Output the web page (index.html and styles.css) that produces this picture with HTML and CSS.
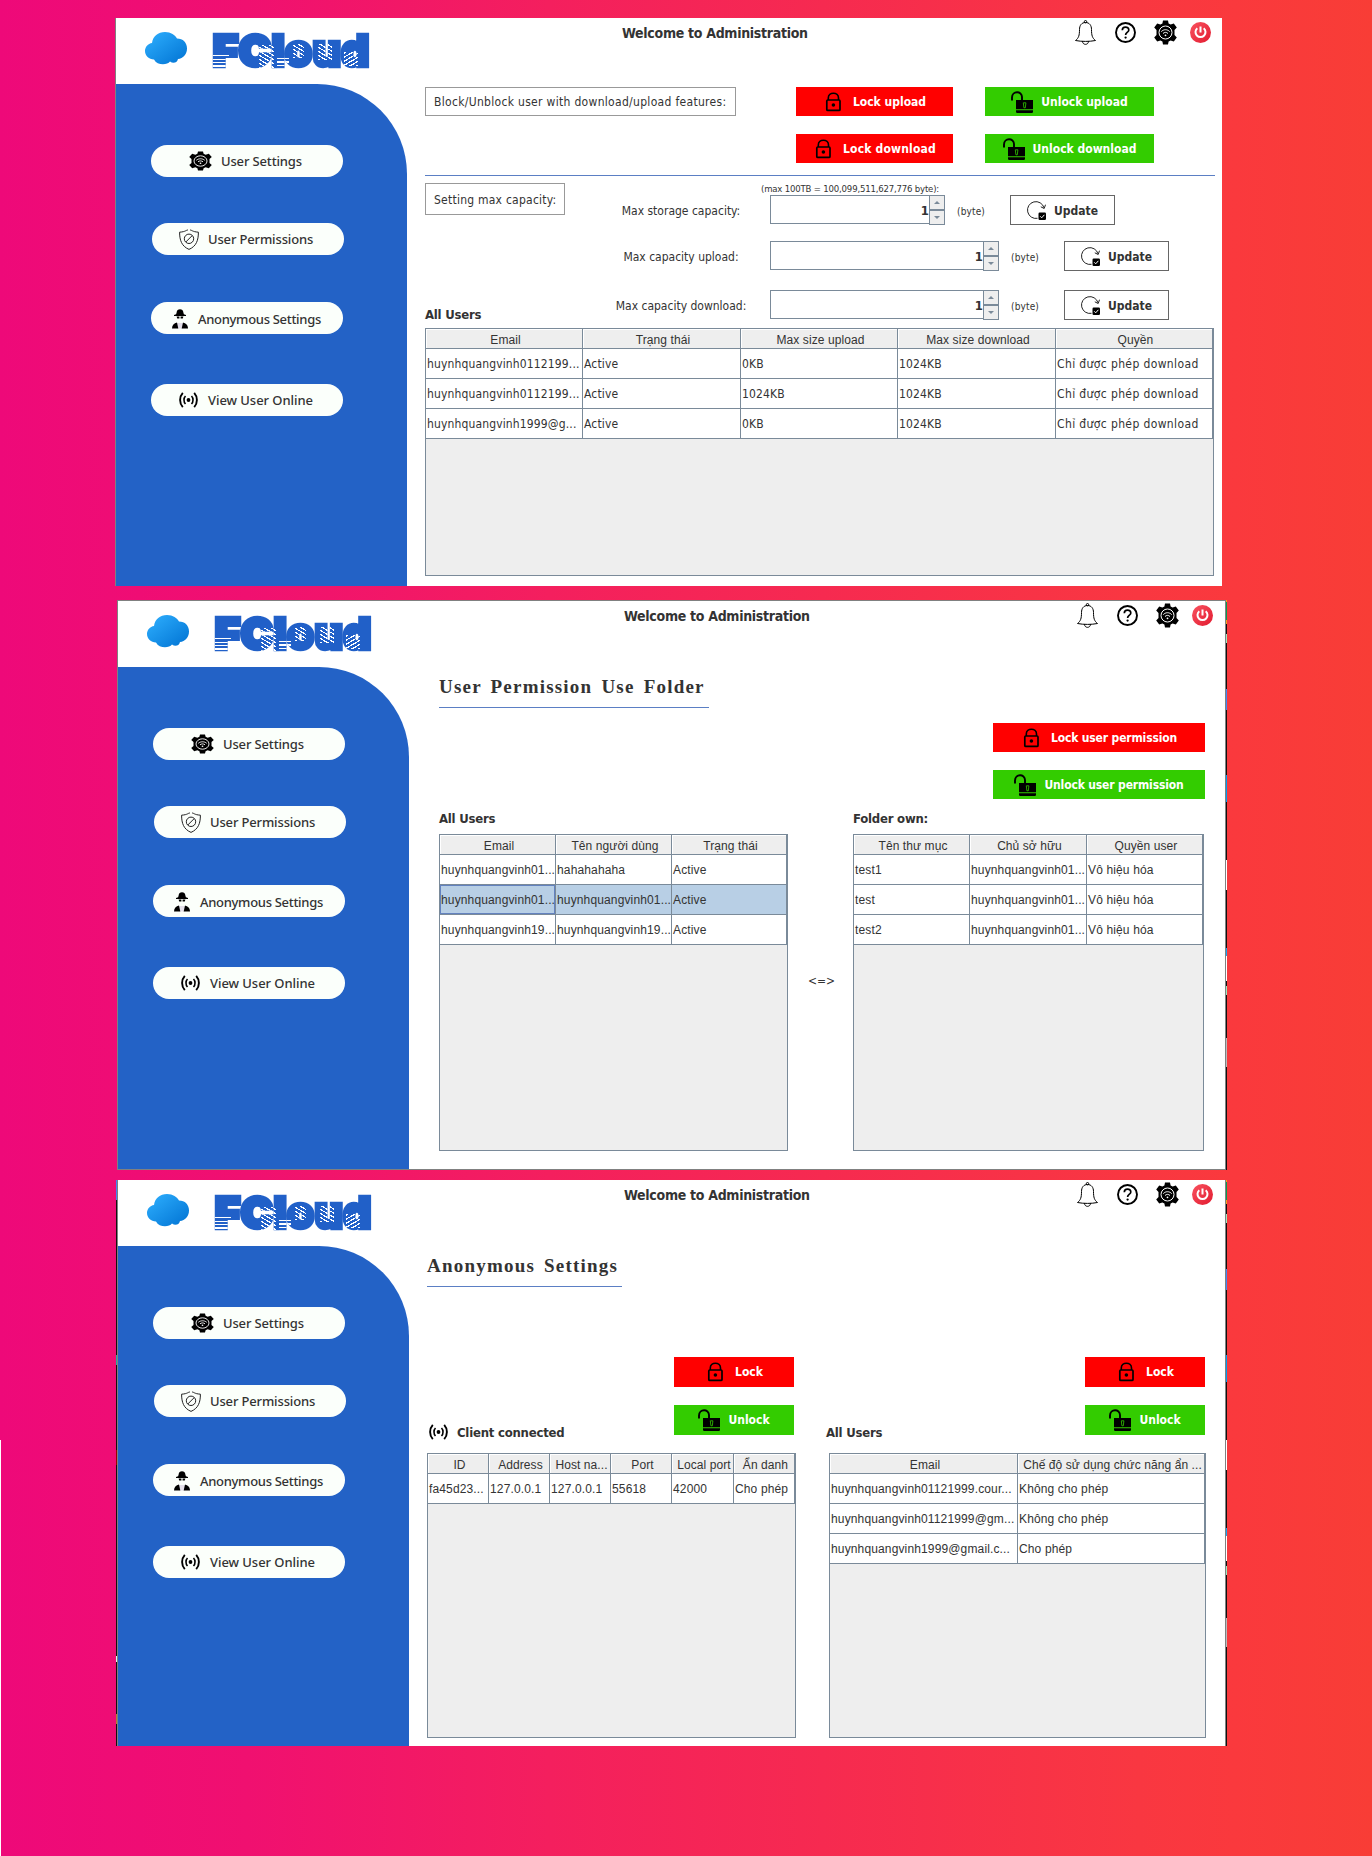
FILE: index.html
```html
<!DOCTYPE html>
<html lang="vi">
<head>
<meta charset="utf-8">
<title>FCloud Administration</title>
<link rel="stylesheet" href="styles.css">
</head>
<body>
<svg class="defs" width="0" height="0" aria-hidden="true">
  <defs>
    <linearGradient id="cloudFill" x1="0" y1="0" x2="1" y2="1"><stop offset="0" stop-color="#2fb0ff"/><stop offset="1" stop-color="#0072d2"/></linearGradient>
    <linearGradient id="powerFill" x1="0" y1="0" x2="1" y2="1"><stop offset="0" stop-color="#f9525f"/><stop offset="1" stop-color="#e21b30"/></linearGradient>
    <symbol id="cloud" viewBox="0 0 42 33"><path fill="url(#cloudFill)" d="M7 11C8 4 13 0 20 0c6 0 10 3 12 6.500 6 0 10 4 10 10 0 6-4 10-9 10.500-1 4-5 5-8 2.500-3 4-13 4-16-2C4 27 0 24 0 19c0-4 3-7.500 7-8z"/></symbol>
    <symbol id="bell" viewBox="0 0 21 25"><g fill="none" stroke="#000" stroke-width="1"><path d="M10.500 2.500c-4 0-6 3-6 7 0 6-.8 8.500-4 11 6 1.200 14 1.200 20 0-3.200-2.500-4-5-4-11 0-4-2-7-6-7z"/><circle cx="10.500" cy="1.700" r="1.200"/><path d="M7.500 21.200c0 4.200 6 4.200 6 0"/></g></symbol>
    <symbol id="help" viewBox="0 0 21 21"><circle cx="10.500" cy="10.500" r="9.500" fill="none" stroke="#000" stroke-width="1.900"/><path d="M7.300 8.300c0-4.300 6.500-4.200 6.500-.4 0 2.400-3.200 2.700-3.200 5" fill="none" stroke="#000" stroke-width="1.700"/><circle cx="10.600" cy="15.600" r="1.150"/></symbol>
    <symbol id="gear" viewBox="0 0 23 25" preserveAspectRatio="none"><path d="M9 .5h5l.6 3 2 1.100 3.200-1.100L22.800 7.500l-2.300 2.600v4.800l2.300 2.600-3 4-3.200-1.100-2 1.100-.6 3H9l-.6-3-2-1.100-3.200 1.100-3-4 2.300-2.600v-4.800L.2 7.500l3-4 3.200 1.100 2-1.100z"/><g fill="none" stroke="#fff"><circle cx="11.500" cy="12.500" r="6.500" stroke-width="1"/><path d="M7.300 11.600c2.400-2.500 6-2.500 8.400 0M9 13.500c1.500-1.500 3.500-1.500 5 0" stroke-width="1"/></g><circle cx="11.500" cy="15.300" r=".9" fill="#fff"/></symbol>
    <symbol id="power" viewBox="0 0 21 21"><circle cx="10.500" cy="10.500" r="10.500" fill="url(#powerFill)"/><path d="M7.300 6.200a5 5 0 1 0 6.400 0M10.500 4.500v6" fill="none" stroke="#fff" stroke-width="2"/></symbol>
    <symbol id="shield" viewBox="0 0 20 21"><g fill="none" stroke="#222" stroke-width="1"><path d="M9 1C7 1 7 2.700 .6 3.200c0 8 2 14 9.400 17.200C17.400 17.200 19.400 11.200 19.400 3.200 13 2.700 13 1 11 1"/><circle cx="10" cy="9.800" r="4.700"/><path d="M6.800 13l6.400-6.400"/></g></symbol>
    <symbol id="spy" viewBox="0 0 16 20"><path d="M4.500 4C5 1 6 .3 8 .3s3 .7 3.500 3.700l.4 1.200L14 6v1H2V6l2.100-.8zM4.600 7.500h2.800v2H5.200zM8.600 7.500h2.800l-.6 2H8.600z"/><path d="M5 14h6v5.500H5z" fill="#e3dfea"/><path d="M0 19.500c0-3.500 2-5 5-6l1.300 6zM16 19.500c0-3.500-2-5-5-6l-1.300 6z"/></symbol>
    <symbol id="signal" viewBox="0 0 19 16"><circle cx="9.500" cy="8" r="1.900"/><g fill="none" stroke="#000"><path d="M6.500 4C4.500 6 4.500 10 6.500 12M12.500 4c2 2 2 6 0 8" stroke-width="1.600"/><path d="M3.800 .8c-3.600 4-3.600 10.400 0 14.400M15.200 .8c3.600 4 3.600 10.400 0 14.400" stroke-width="1.900"/></g></symbol>
    <symbol id="lock" viewBox="1 0 22 20"><rect x="4.800" y="8" width="13.200" height="10.400" rx="1" fill="none" stroke="#000" stroke-width="1.700"/><path d="M6.300 8V6c0-6.400 10.200-6.400 10.200 0v2" fill="none" stroke="#000" stroke-width="1.600"/><circle cx="11.400" cy="13" r="1.800"/></symbol>
    <symbol id="unlock" viewBox="0 0 22 22"><path d="M1 9.500V6.500C1 -.4 11 -.4 11 6v3.500" fill="none" stroke="#000" stroke-width="1.900"/><path d="M5 9h17v9.300H5zM5 19.200h17v1.600q0 1.200-1.200 1.200H6.200Q5 22 5 20.800z"/><path d="M12.300 11.800h2.600l-.6 5h-1.400z" fill="none" stroke="#3c0" stroke-width=".8"/></symbol>
    <symbol id="refresh" viewBox="0 0 19 19"><path d="M10.500 17.300A8.400 8.400 0 1 1 17 6.800" fill="none" stroke="#222" stroke-width="1"/><path d="M13.800 5.800l3.400 1.700L18.500 3.700" fill="none" stroke="#222" stroke-width="1"/><rect x="11.500" y="11.500" width="7.500" height="7.500" rx="1.200"/><path d="M13.200 15.300l1.500 1.500 2.700-3" fill="none" stroke="#fff" stroke-width="1"/></symbol>
  </defs>
</svg>

<div class="stage">

<section class="panel panel--features">
  <div class="window">
    <header class="bar">
      <svg class="bar__cloud"><use href="#cloud"/></svg>
      <span class="bar__logo">FCloud</span>
      <h1 class="bar__title">Welcome to Administration</h1>
      <svg class="bar__bell"><use href="#bell"/></svg><svg class="bar__help"><use href="#help"/></svg><svg class="bar__gear"><use href="#gear"/></svg><svg class="bar__power"><use href="#power"/></svg>
    </header>
    <div class="body">
      <nav class="side">
        <a class="pill"><svg class="pill__gear"><use href="#gear"/></svg><span>User Settings</span></a>
        <a class="pill pill--perm"><svg class="pill__shield"><use href="#shield"/></svg><span>User Permissions</span></a>
        <a class="pill pill--anon"><svg class="pill__spy"><use href="#spy"/></svg><span>Anonymous Settings</span></a>
        <a class="pill pill--online"><svg class="pill__signal"><use href="#signal"/></svg><span>View User Online</span></a>
      </nav>
      <main class="features">
        <div class="features__row"><div class="boxed boxed--block">Block/Unblock user with download/upload features:</div><button class="btn btn--lock"><svg><use href="#lock"/></svg><span>Lock upload</span></button><button class="btn btn--unlock"><svg><use href="#unlock"/></svg><span>Unlock upload</span></button></div>
        <div class="features__row features__row--second"><button class="btn btn--lock"><svg><use href="#lock"/></svg><span class="roomy">Lock download</span></button><button class="btn btn--unlock"><svg><use href="#unlock"/></svg><span>Unlock download</span></button></div>
        <hr class="rule">
        <div class="limits">
          <div class="limits__left"><div class="boxed boxed--max">Setting max capacity:</div><h2 class="caption">All Users</h2></div>
          <div class="limits__right">
            <p class="hint">(max 100TB = 100,099,511,627,776 byte):</p>
            <div class="limit"><label>Max storage capacity:</label><div class="spin spin--short"><span class="spin__value">1</span><span class="spin__arrows"><i class="up"></i><i class="down"></i></span></div><span class="unit">(byte)</span><button class="update"><svg><use href="#refresh"/></svg><span>Update</span></button></div>
            <div class="limit limit--upload"><label>Max capacity upload:</label><div class="spin"><span class="spin__value">1</span><span class="spin__arrows"><i class="up"></i><i class="down"></i></span></div><span class="unit">(byte)</span><button class="update"><svg><use href="#refresh"/></svg><span>Update</span></button></div>
            <div class="limit limit--download"><label>Max capacity download:</label><div class="spin"><span class="spin__value">1</span><span class="spin__arrows"><i class="up"></i><i class="down"></i></span></div><span class="unit">(byte)</span><button class="update"><svg><use href="#refresh"/></svg><span>Update</span></button></div>
          </div>
        </div>
        <div class="grid grid--limits">
          <div class="tr th"><span>Email</span><span>Trạng thái</span><span>Max size upload</span><span>Max size download</span><span>Quyền</span></div>
          <div class="tr"><span>huynhquangvinh0112199...</span><span>Active</span><span>0KB</span><span>1024KB</span><span>Chỉ được phép download</span></div>
          <div class="tr"><span>huynhquangvinh0112199...</span><span>Active</span><span>1024KB</span><span>1024KB</span><span>Chỉ được phép download</span></div>
          <div class="tr"><span>huynhquangvinh1999@g...</span><span>Active</span><span>0KB</span><span>1024KB</span><span>Chỉ được phép download</span></div>
        </div>
      </main>
    </div>
  </div>
</section>

<section class="panel panel--folders">
  <div class="window">
    <header class="bar">
      <svg class="bar__cloud"><use href="#cloud"/></svg>
      <span class="bar__logo">FCloud</span>
      <h1 class="bar__title">Welcome to Administration</h1>
      <svg class="bar__bell"><use href="#bell"/></svg><svg class="bar__help"><use href="#help"/></svg><svg class="bar__gear"><use href="#gear"/></svg><svg class="bar__power"><use href="#power"/></svg>
    </header>
    <div class="body">
      <nav class="side">
        <a class="pill"><svg class="pill__gear"><use href="#gear"/></svg><span>User Settings</span></a>
        <a class="pill pill--perm"><svg class="pill__shield"><use href="#shield"/></svg><span>User Permissions</span></a>
        <a class="pill pill--anon"><svg class="pill__spy"><use href="#spy"/></svg><span>Anonymous Settings</span></a>
        <a class="pill pill--online"><svg class="pill__signal"><use href="#signal"/></svg><span>View User Online</span></a>
      </nav>
      <main class="folders">
        <h2 class="heading heading--folders">User Permission Use Folder</h2>
        <div class="folders__actions"><button class="btn btn--lock"><svg><use href="#lock"/></svg><span>Lock user permission</span></button><button class="btn btn--unlock"><svg><use href="#unlock"/></svg><span>Unlock user permission</span></button></div>
        <div class="folders__tables">
          <div>
            <h3 class="caption">All Users</h3>
            <div class="grid grid--people grid--sans">
              <div class="tr th"><span>Email</span><span>Tên người dùng</span><span>Trạng thái</span></div>
              <div class="tr"><span>huynhquangvinh01...</span><span>hahahahaha</span><span>Active</span></div>
              <div class="tr is-selected"><span>huynhquangvinh01...</span><span>huynhquangvinh01...</span><span>Active</span></div>
              <div class="tr"><span>huynhquangvinh19...</span><span>huynhquangvinh19...</span><span>Active</span></div>
            </div>
          </div>
          <div class="folders__link">&lt;=&gt;</div>
          <div>
            <h3 class="caption">Folder own:</h3>
            <div class="grid grid--owned grid--sans">
              <div class="tr th"><span>Tên thư mục</span><span>Chủ sở hữu</span><span>Quyền user</span></div>
              <div class="tr"><span>test1</span><span>huynhquangvinh01...</span><span>Vô hiệu hóa</span></div>
              <div class="tr"><span>test</span><span>huynhquangvinh01...</span><span>Vô hiệu hóa</span></div>
              <div class="tr"><span>test2</span><span>huynhquangvinh01...</span><span>Vô hiệu hóa</span></div>
            </div>
          </div>
        </div>
      </main>
    </div>
  </div>
  <div class="sliver"></div>
</section>

<section class="panel panel--anonymous">
  <div class="sliver sliver--dark"></div>
  <div class="window">
    <header class="bar">
      <svg class="bar__cloud"><use href="#cloud"/></svg>
      <span class="bar__logo">FCloud</span>
      <h1 class="bar__title">Welcome to Administration</h1>
      <svg class="bar__bell"><use href="#bell"/></svg><svg class="bar__help"><use href="#help"/></svg><svg class="bar__gear"><use href="#gear"/></svg><svg class="bar__power"><use href="#power"/></svg>
    </header>
    <div class="body">
      <nav class="side">
        <a class="pill"><svg class="pill__gear"><use href="#gear"/></svg><span>User Settings</span></a>
        <a class="pill pill--perm"><svg class="pill__shield"><use href="#shield"/></svg><span>User Permissions</span></a>
        <a class="pill pill--anon"><svg class="pill__spy"><use href="#spy"/></svg><span>Anonymous Settings</span></a>
        <a class="pill pill--online"><svg class="pill__signal"><use href="#signal"/></svg><span>View User Online</span></a>
      </nav>
      <main class="anonymous">
        <h2 class="heading heading--anonymous">Anonymous Settings</h2>
        <div class="anonymous__cols">
          <div>
            <div class="anonymous__head"><h3 class="caption"><svg><use href="#signal"/></svg><span>Client connected</span></h3><div class="anonymous__actions"><button class="btn btn--lock"><svg><use href="#lock"/></svg><span>Lock</span></button><button class="btn btn--unlock"><svg><use href="#unlock"/></svg><span>Unlock</span></button></div></div>
            <div class="grid grid--clients grid--sans">
              <div class="tr th"><span>ID</span><span>Address</span><span>Host na...</span><span>Port</span><span>Local port</span><span>Ẩn danh</span></div>
              <div class="tr"><span>fa45d23...</span><span>127.0.0.1</span><span>127.0.0.1</span><span>55618</span><span>42000</span><span>Cho phép</span></div>
            </div>
          </div>
          <div>
            <div class="anonymous__head anonymous__head--users"><h3 class="caption">All Users</h3><div class="anonymous__actions"><button class="btn btn--lock"><svg><use href="#lock"/></svg><span>Lock</span></button><button class="btn btn--unlock"><svg><use href="#unlock"/></svg><span>Unlock</span></button></div></div>
            <div class="grid grid--access grid--sans">
              <div class="tr th"><span>Email</span><span>Chế độ sử dụng chức năng ẩn ...</span></div>
              <div class="tr"><span>huynhquangvinh01121999.cour...</span><span>Không cho phép</span></div>
              <div class="tr"><span>huynhquangvinh01121999@gm...</span><span>Không cho phép</span></div>
              <div class="tr"><span>huynhquangvinh1999@gmail.c...</span><span>Cho phép</span></div>
            </div>
          </div>
        </div>
      </main>
    </div>
  </div>
  <div class="sliver"></div>
</section>
</div>
</body>
</html>
```
FILE: styles.css
```css
* { box-sizing: border-box; }

body {
  margin: 0;
  font-family: "DejaVu Sans Condensed", "DejaVu Sans", sans-serif;
  font-size: 12px;
  color: #333;
  background: #fff;
}

h1, h2, h3, p { margin: 0; font-weight: normal; }
button { font: inherit; letter-spacing: inherit; margin: 0; padding: 0; border: 0; }
svg { display: block; flex: none; }
.defs { position: absolute; }

.stage {
  height: 1856px;
  padding: 18px 0 0 115px;
  background:
    linear-gradient(#fff, #fff) 0 100% / 1px 416px no-repeat,
    linear-gradient(90deg, #ee0979, #f01070 18%, #f41f5e 40%, #f62a50 60%, #f93741 83%, #fa393d 90%, #f83d36);
}

.panel { display: flex; width: 1107px; height: 568px; }
.panel--folders { width: 1110px; height: 570px; margin: 14px 0 10px 2px; }
.panel--anonymous { width: 1111px; height: 566px; margin-left: 1px; }

.window {
  flex: 1;
  display: flex;
  flex-direction: column;
  background: #fff;
  border-left: 1px solid #808080;
}
.panel--folders .window { border: 1px solid #808080; }
.panel--anonymous .window { border-right: 1px solid #808080; }

.sliver {
  width: 1px;
  background: linear-gradient(#f0a020 0 2px, #0a9a50 2px 20px, #f0a020 20px 24px, #111 24px 34px, #9fe8c0 34px 43px, #111 43px 89px, #4286f4 89px 110px, #111 110px 175px, #009cf0 175px 202px, #111 202px 260px, #fff 260px 290px, #111 290px 348px, #1aa3f0 348px 356px, #fff 356px 381px, #111 381px 386px, #9fe8c0 386px 395px, #111 395px 438px, #bbb 438px 467px, #111 467px);
}
.sliver--dark { background: linear-gradient(#4286f4 0 20px, #111 20px 175px, #2a9 175px 185px, #111 185px 270px, #900 270px 285px, #111 285px 476px, #cfe 476px 482px, #111 482px 534px, #b08030 534px 544px, #111 544px); }

/* title bar */
.bar { display: flex; flex: none; height: 66px; align-items: flex-start; }
.bar__cloud { width: 42px; height: 33px; margin: 14px 0 0 29px; }
.bar__logo {
  width: 158px;
  height: 40px;
  margin: 12px 0 0 25px;
  padding-left: 1px;
  font: 900 43px/40px Inter, "Lato", sans-serif;
  letter-spacing: .7px;
  color: transparent;
  -webkit-text-stroke: 4.500px transparent;
  background:
    repeating-linear-gradient(#fff 0 1.200px, transparent 1.200px 3.500px) 0 25px / 17px 14px no-repeat,
    repeating-linear-gradient(30deg, #fff 0 1.200px, transparent 1.200px 3.500px) 47px 15px / 15px 23px no-repeat,
    repeating-linear-gradient(#fff 0 1.200px, transparent 1.200px 3.500px) 65px 28px / 12px 11px no-repeat,
    repeating-linear-gradient(30deg, #fff 0 1.200px, transparent 1.200px 3.500px) 81px 14px / 11px 14px no-repeat,
    repeating-linear-gradient(30deg, #fff 0 1.200px, transparent 1.200px 3.500px) 106px 14px / 14px 16px no-repeat,
    repeating-linear-gradient(-30deg, #fff 0 1.200px, transparent 1.200px 3.500px) 132px 22px / 14px 14px no-repeat,
    #2160c8;
  -webkit-background-clip: text;
  background-clip: text;
}
.bar__title { width: 190px; margin: 6px 0 0 252px; font-weight: bold; font-size: 14px; line-height: 18px; letter-spacing: -.3px; white-space: nowrap; }
.bar__bell { width: 21px; height: 25px; margin: 2px 0 0 263px; }
.bar__help { width: 21px; height: 21px; margin: 4px 0 0 19px; }
.bar__gear { width: 23px; height: 25px; margin: 2px 0 0 18px; }
.bar__power { width: 21px; height: 21px; margin: 4px 0 0 13px; }

/* navigation */
.body { flex: 1; display: flex; min-height: 0; }
.side { width: 291px; flex: none; padding: 61px 0 0 35px; background: #2362c6; border-top-right-radius: 90px; }
.pill {
  display: flex;
  align-items: center;
  width: 192px;
  height: 32px;
  padding-left: 38px;
  border-radius: 16px;
  background: #fbfffb;
  font: 500 13px/18px "Noto Sans", sans-serif;
  letter-spacing: -.15px;
  white-space: nowrap;
}
.pill--perm { margin: 46px 0 0 1px; padding-left: 27px; }
.pill--anon { margin-top: 47px; padding: 2px 0 0 21px; letter-spacing: -.3px; }
.pill--online { margin-top: 50px; padding-left: 28px; letter-spacing: -.05px; }
.pill__gear { width: 23px; height: 20px; margin-right: 9px; }
.pill__shield { width: 20px; height: 21px; margin-right: 9px; }
.pill__spy { width: 16px; height: 20px; margin-right: 10px; }
.pill__signal { width: 19px; height: 16px; margin-right: 10px; }

/* shared controls */
.btn { display: flex; align-items: center; justify-content: center; gap: 8px; height: 29px; color: #fff; font-weight: bold; white-space: nowrap; }
.btn svg { width: 22px; height: 22px; }
.btn--lock { background: #f00; }
.btn--lock svg { height: 20px; }
.btn--unlock { background: #3c0; }
.roomy { letter-spacing: .19px; }
.boxed { display: flex; align-items: center; padding-left: 8px; border: 1px solid #999; letter-spacing: .31px; white-space: nowrap; }
.caption { display: flex; align-items: center; font-weight: bold; font-size: 13px; letter-spacing: -.22px; white-space: nowrap; }
.heading { height: 41px; border-bottom: 1px solid #5b7fc4; font: bold 19px/40px "Liberation Serif", serif; letter-spacing: 1.210px; word-spacing: 3.100px; white-space: nowrap; }

/* tables */
.grid { border: 1px solid #7a8a99; background: #eee; }
.tr { display: grid; height: 30px; background: #fff; white-space: nowrap; }
.tr > span { display: flex; align-items: center; overflow: hidden; padding-left: 1px; border: solid #7a8a99; border-width: 0 1px 1px 0; letter-spacing: .14px; }
.th { height: 20px; }
.th > span { justify-content: center; padding: 2px 0 0 3px; background: #eee; box-shadow: inset 1px 1px #fff; letter-spacing: .08px; }
.th > span, .grid--sans { font-family: "Liberation Sans", sans-serif; }
.grid--limits { height: 248px; width: 789px; }
.grid--limits .tr { grid-template-columns: 157px 158px 157px 158px 157px; }
.grid--limits .tr:not(.th) > span:last-child { letter-spacing: .38px; }
.grid--people { height: 317px; width: 349px; }
.grid--people .tr { grid-template-columns: 116px 116px 115px; }
.grid--owned { height: 317px; width: 351px; }
.grid--owned .tr { grid-template-columns: 116px 117px 116px; }
.grid--clients { height: 285px; width: 369px; }
.grid--clients .tr { grid-template-columns: 61px 61px 61px 61px 62px 61px; }
.grid--access { height: 285px; width: 377px; }
.grid--access .tr { grid-template-columns: 188px 187px; }
.is-selected { background: #b8cfe5; }
.is-selected > span:first-child { box-shadow: inset 0 0 0 1px #6382bf; }

/* download / upload features */
.features { padding: 3px 0 0 18px; }
.features__row { display: flex; height: 29px; }
.features__row--second { margin-top: 18px; padding-left: 311px; }
.boxed--block { width: 311px; }
.features .btn--lock { width: 157px; margin-left: 60px; }
.features .btn--unlock { width: 169px; margin-left: 32px; }
.rule { width: 790px; height: 1px; margin: 12px 0 0; border: 0; background: #5b7fc4; }
.limits { display: flex; height: 152px; }
.limits__left { display: flex; flex-direction: column; justify-content: space-between; width: 170px; padding-top: 7px; }
.boxed--max { width: 140px; height: 32px; padding-top: 1px; letter-spacing: .24px; }
.limits__left .caption { height: 28px; }
.hint { height: 19px; padding: 6px 0 0 166px; font-size: 9.500px; line-height: 13px; letter-spacing: -.18px; white-space: nowrap; }
.limit { display: flex; height: 30px; align-items: center; }
.limit--upload { margin-top: 16px; }
.limit--download { margin-top: 19px; }
.limit label { width: 172px; margin-right: 3px; padding-top: 2px; text-align: center; white-space: nowrap; }
.spin { display: flex; width: 229px; height: 30px; }
.spin--short { width: 175px; }
.spin__value { flex: 1; height: 29px; border: solid #7a8a99; border-width: 1px 0 1px 1px; text-align: right; font-weight: bold; font-size: 13px; line-height: 29px; }
.spin__arrows { display: flex; flex-direction: column; width: 16px; }
.spin__arrows i { flex: 1; display: flex; align-items: center; justify-content: center; border: 1px solid #7a8a99; background: #eee; }
.spin__arrows i::after { content: ""; border: 3px solid transparent; }
.spin__arrows .up::after { border-top: 0; border-bottom-color: #7a8a99; }
.spin__arrows .down::after { border-bottom: 0; border-top-color: #7a8a99; }
.unit { width: 28px; margin: 2px 25px 0 12px; font-size: 10px; letter-spacing: .15px; white-space: nowrap; }
.update { display: flex; align-items: center; gap: 8px; width: 105px; height: 30px; padding: 1px 0 0 16px; border: 1px solid #666; background: #fff; color: #333; font-weight: bold; }
.update svg { width: 19px; height: 19px; }

/* folder permissions */
.folders { padding-left: 30px; }
.heading--folders { width: 270px; }
.folders__actions { display: flex; flex-direction: column; gap: 18px; width: 212px; margin: 15px 0 0 554px; letter-spacing: -.15px; }
.folders__tables { display: flex; }
.folders .caption { height: 35px; padding-top: 3px; }
.folders__link { width: 65px; padding: 175px 0 0 2px; text-align: center; }

/* anonymous access */
.anonymous { padding-left: 18px; }
.heading--anonymous { width: 195px; }
.anonymous__cols { display: flex; gap: 33px; }
.anonymous__head { display: flex; justify-content: space-between; align-items: flex-end; height: 166px; padding: 0 2px 0 2px; }
.anonymous__head--users { margin-left: -3px; padding: 0 1px 0 0; }
.anonymous__head .caption { height: 42px; gap: 9px; }
.anonymous__head .caption svg { width: 19px; height: 16px; }
.anonymous__actions { display: flex; flex-direction: column; gap: 18px; width: 120px; padding-bottom: 18px; }
.anonymous .btn { height: 30px; }
```
